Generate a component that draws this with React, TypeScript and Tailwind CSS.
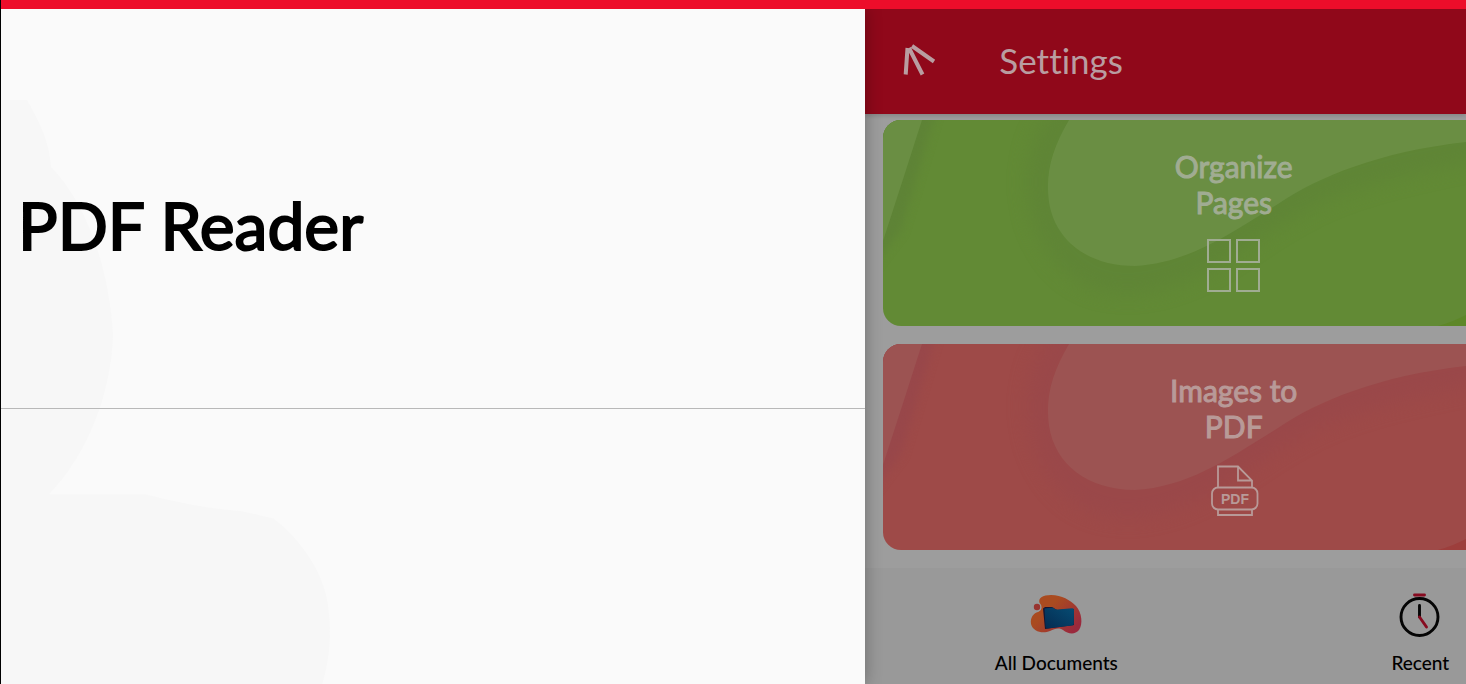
import type { ReactNode } from "react";

type CardColors = { light: string; shade: string; corner: string; id: string };

function CardBackdrop({ light, shade, corner, id }: CardColors) {
  return (
    <svg
      className="absolute inset-0 h-full w-full"
      viewBox="0 0 703 206"
      preserveAspectRatio="xMinYMin slice"
      aria-hidden="true"
    >
      <defs>
        <filter id={id} x="-20%" y="-20%" width="140%" height="150%" colorInterpolationFilters="sRGB">
          <feGaussianBlur stdDeviation="9" />
        </filter>
        <filter id={`${id}-edge`} x="-50%" y="-20%" width="200%" height="150%" colorInterpolationFilters="sRGB">
          <feGaussianBlur stdDeviation="4" />
        </filter>
      </defs>
      <path d="M-20 -20H56L18 110L-20 160Z" fill={shade} filter={`url(#${id}-edge)`} />
      <path d="M0 0H39L23 50L0 121Z" fill={light} />
      <path
        d="M178 -20C144 12 137 60 150 103C168 150 201 177 252 174C320 168 360 125 412 97C460 69 520 56 600 40L720 32V-20Z"
        fill={shade}
        fillOpacity="0.7"
        filter={`url(#${id})`}
      />
      <path
        d="M186 0C169 29 162 53 166 82C172 120 204 146 252 146C305 143 345 115 395 84C435 57 495 32 583 22C620 18 660 20 703 24V0Z"
        fill={light}
      />
      <path d="M555 206C566 203 575 199 585 194C630 170 670 145 703 135V206Z" fill={corner} />
    </svg>
  );
}

function ToolCard({
  title,
  background,
  colors,
  children,
}: {
  title: [string, string];
  background: string;
  colors: CardColors;
  children: ReactNode;
}) {
  return (
    <button
      type="button"
      className={`relative flex h-[206px] w-full flex-col items-center overflow-hidden rounded-[18px] pt-7 pr-[2px] ${background}`}
    >
      <CardBackdrop {...colors} />
      <span className="relative text-[30px] leading-9 [-webkit-text-stroke:1px_currentColor]">
        {title[0]}
        <br />
        {title[1]}
      </span>
      <span className="relative mt-[18px]">{children}</span>
    </button>
  );
}

function GridIcon() {
  return (
    <svg width="54" height="54" viewBox="0 0 54 54" fill="none" stroke="currentColor" strokeWidth="2" aria-hidden="true">
      <rect x="1" y="2" width="22" height="22" />
      <rect x="30" y="2" width="22" height="22" />
      <rect x="1" y="31" width="22" height="22" />
      <rect x="30" y="31" width="22" height="22" />
    </svg>
  );
}

function PdfIcon() {
  return (
    <svg width="54" height="54" viewBox="0 0 54 54" fill="none" stroke="currentColor" strokeWidth="1.8" aria-hidden="true">
      <path d="M11 25.5V4.500H31L45 18.500V25.500M31 4.500V18.500H45" />
      <rect x="5" y="25.500" width="45.500" height="22" rx="6" />
      <path d="M11 47.500V53H45V47.500" />
      <text
        x="28"
        y="42"
        textAnchor="middle"
        fontFamily="Liberation Sans, sans-serif"
        fontWeight="700"
        fontSize="14"
        fill="currentColor"
        stroke="none"
      >
        PDF
      </text>
    </svg>
  );
}

function FolderIcon() {
  return (
    <svg width="54" height="44" viewBox="0 0 54 44" aria-hidden="true">
      <defs>
        <linearGradient id="blob" x1="0" y1="0" x2="1" y2="0.7">
          <stop offset="0.4" stopColor="#a94b20" />
          <stop offset="1" stopColor="#9a293d" />
        </linearGradient>
        <linearGradient id="folder" x1="0" y1="1" x2="1" y2="0">
          <stop offset="0" stopColor="#052b51" />
          <stop offset="1" stopColor="#064c73" />
        </linearGradient>
      </defs>
      <path
        d="M11 11C8 5 14 2 22 2C33 2 41 7 47 13C53 20 54 31 50 37C46 42 39 41 34 37C29 34 26 36 21 38C14 41 4 39 2 31C1 24 5 20 9 19C13 17 13 15 11 11Z"
        fill="url(#blob)"
      />
      <circle cx="8" cy="14" r="4.500" fill="#999999" />
      <circle cx="8" cy="14" r="3.200" fill="#98332f" />
      <path d="M14 15.500L16 14L23 14L28 17L45 16V32L16 36Z" fill="#141533" />
      <path d="M15.500 15.500L24 14.500Q26 17 29 16.500L43 15.200Q45 15 45 17L44.800 31Q44.500 32.500 43 32.500L18 35.500L16.500 34Z" fill="url(#folder)" />
    </svg>
  );
}

function ClockIcon() {
  return (
    <svg width="44" height="44" viewBox="0 0 44 44" fill="none" strokeLinecap="round" aria-hidden="true">
      <circle cx="21.500" cy="24" r="18.500" stroke="#050505" strokeWidth="2.900" />
      <path d="M21.500 12.500V24" stroke="#050505" strokeWidth="2.900" />
      <path d="M16.500 2H26.500M21.500 24L28.500 34" stroke="#870b20" strokeWidth="2.900" />
    </svg>
  );
}

function NavItem({ label, children }: { label: string; children: ReactNode }) {
  return (
    <a href="#" className="flex w-[364px] shrink-0 flex-col items-center pt-[25px] text-black">
      <span className="flex h-[58px] items-start justify-center">{children}</span>
      <span className="text-[19px] leading-6 font-medium">{label}</span>
    </a>
  );
}

export default function App() {
  return (
    <div
      className="flex min-h-screen flex-col overflow-hidden border-l border-black bg-[#9d9d9d] [font-variant-ligatures:none]"
      style={{ fontFamily: "Lato, sans-serif" }}
    >
      <div className="relative z-20 h-[9px] shrink-0 bg-[#ed0d2a]" />
      <div className="flex flex-1">
        <aside className="relative z-10 w-[59%] shrink-0 bg-[#fafafa] shadow-[0_0_16px_rgba(0,0,0,0.3)]">
          <svg className="absolute inset-0 h-full w-full" viewBox="0 0 864 675" preserveAspectRatio="xMinYMin slice" aria-hidden="true">
            <path
              d="M0 91H26C36 109 48 129 50 158C82 190 108 253 112 326C110 385 86 446 48 485L144 485C180 494 200 498 240 502L272 509C295 526 315 553 323 579C331 605 331 644 321 675H0Z"
              fill="#f7f7f7"
            />
          </svg>
          <div className="relative flex h-[400px] flex-col justify-start border-b border-[#b8b8b8] px-[17px] pt-44">
            <h1 className="text-[66px] leading-[80px] text-black [-webkit-text-stroke:2px_currentColor]">PDF Reader</h1>
          </div>
        </aside>
        <main className="flex min-w-0 flex-1 flex-col overflow-hidden">
          <header className="relative flex h-[105px] shrink-0 items-center bg-[#90081a] pb-1 pl-[34px] text-[#b99da1] shadow-[0_2px_4px_rgba(0,0,0,0.15)]">
            <button type="button" aria-label="Menu">
              <svg width="40" height="40" viewBox="0 0 40 40" fill="none" stroke="currentColor" strokeWidth="4" aria-hidden="true">
                <path d="M8.500 8L6.700 34.500M10 8L23.500 34.500M13 6L35 21.500" />
              </svg>
            </button>
            <h2 className="ml-[60px] text-[35px] leading-[42px]">Settings</h2>
          </header>
          <div className="flex w-[120%] flex-1 flex-col gap-[18px] pt-[6px] pb-[18px] pl-[18px]">
            <ToolCard
              title={["Organize", "Pages"]}
              background="bg-[#628a35] text-[#a0ac92]"
              colors={{ light: "#6a8e43", shade: "#5e8336", corner: "#5d8728", id: "green-shade" }}
            >
              <GridIcon />
            </ToolCard>
            <ToolCard
              title={["Images to", "PDF"]}
              background="bg-[#9e4a48] text-[#b89a98]"
              colors={{ light: "#9c5352", shade: "#98474a", corner: "#9d3e3c", id: "red-shade" }}
            >
              <PdfIcon />
            </ToolCard>
          </div>
          <nav className="flex h-[116px] shrink-0 bg-[#999999] pl-[9px]">
            <NavItem label="All Documents">
              <FolderIcon />
            </NavItem>
            <NavItem label="Recent">
              <ClockIcon />
            </NavItem>
          </nav>
        </main>
      </div>
    </div>
  );
}
